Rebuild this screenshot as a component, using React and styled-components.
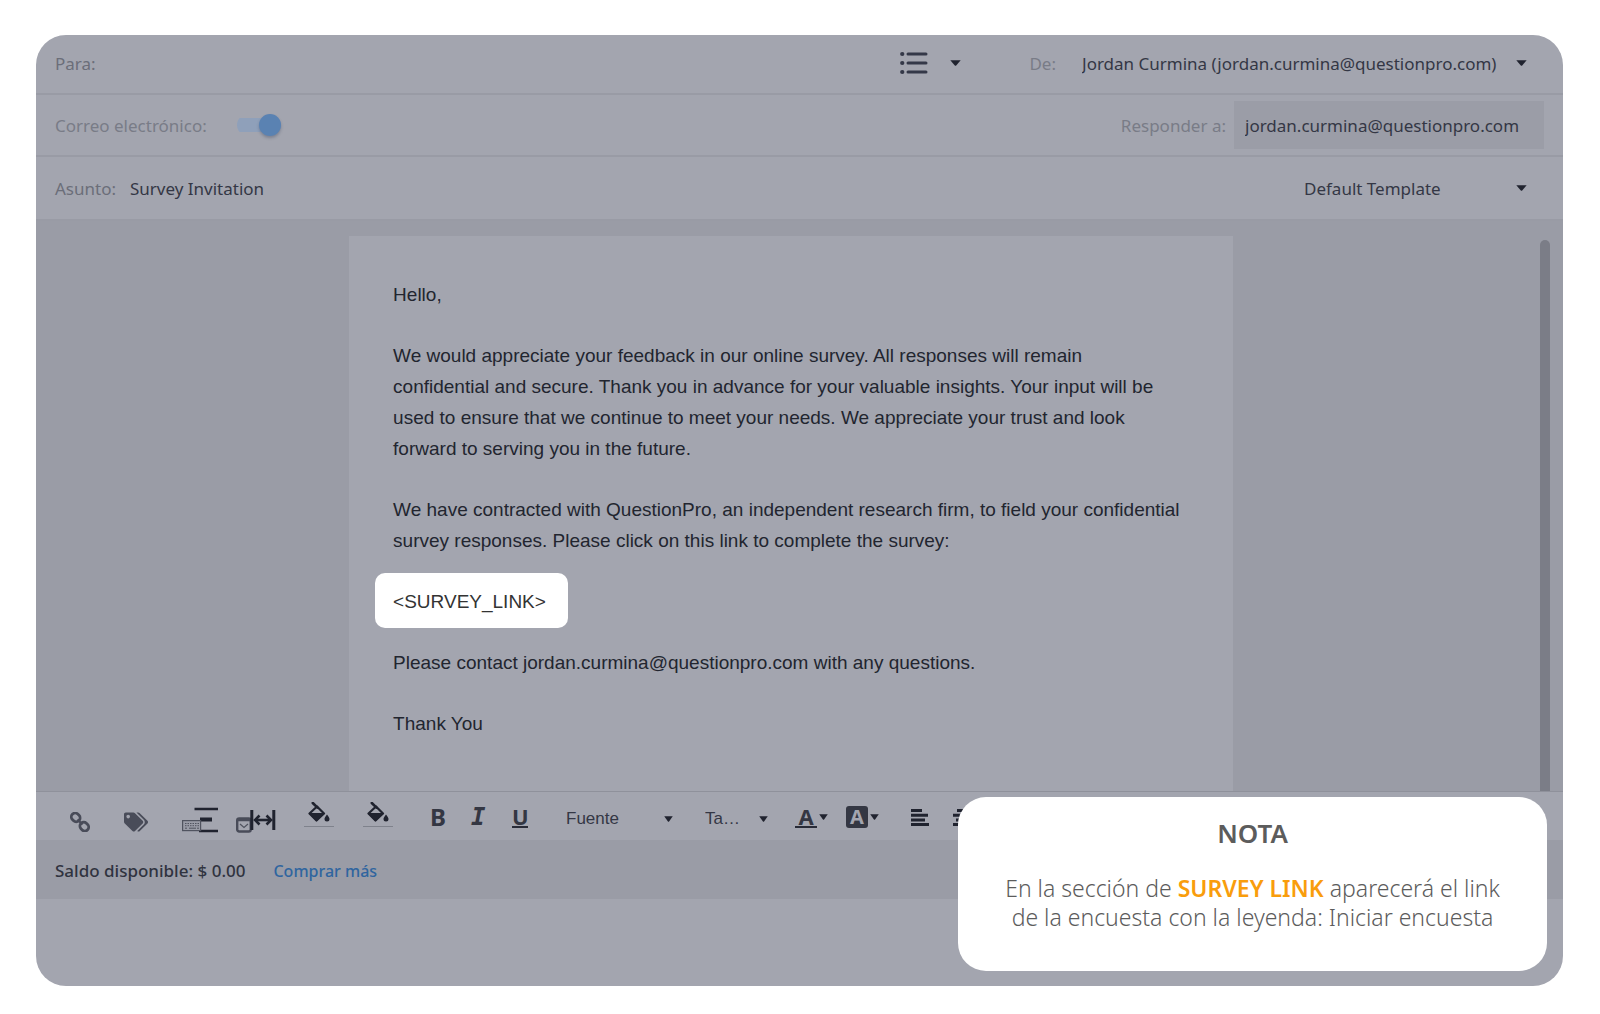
import React, { useState } from "react";
import styled, { createGlobalStyle } from "styled-components";
import { FaTags } from "react-icons/fa";

const ui = `"Noto Sans", "Open Sans", sans-serif`;
const mail = `"Liberation Sans", Arial, sans-serif`;

const GlobalStyle = createGlobalStyle`
  * {
    box-sizing: border-box;
  }
  body {
    margin: 0;
    background: #fff;
    font-family: ${ui};
  }
  button, input, select {
    font: inherit;
    color: inherit;
    margin: 0;
    padding: 0;
    border: 0;
    background: none;
    appearance: none;
  }
`;

const Page = styled.main`
  min-height: 100vh;
  padding: 35px 37px 28px 36px;
  display: flex;
`;

const Composer = styled.section`
  position: relative;
  flex: 1;
  min-width: 0;
  display: flex;
  flex-direction: column;
  border-radius: 30px;
  background-color: #a3a5af;
  overflow: hidden;
`;

const Row = styled.div`
  display: flex;
  align-items: center;
  justify-content: space-between;
  height: ${({ $height }) => $height}px;
  padding: 0 ${({ $right }) => $right || 36}px 0 19px;
  border-bottom: 2px solid #999ba5;
  font-size: 17px;
  color: #343745;

  &:first-child {
    padding-bottom: 2px;
  }
`;

const Group = styled.div`
  display: flex;
  align-items: center;
  gap: ${({ $gap }) => $gap}px;
`;

const Label = styled.label`
  color: ${({ $faded }) => ($faded ? "#797c87" : "#6b6e79")};
`;

const TextInput = styled.input`
  width: 400px;
  height: 32px;
  outline: none;
`;

const ReplyInput = styled.input`
  width: 310px;
  height: 48px;
  padding: 0 11px;
  background-color: #9b9da7;
  outline: none;
`;

const ListButton = styled.button`
  display: flex;
  align-items: center;
  gap: 22px;
  margin-right: 42px;
`;

const Picker = styled.div`
  display: flex;
  align-items: center;

  select {
    width: ${({ $width }) => $width}px;
    outline: none;
  }
`;

const Toggle = styled.input`
  width: 44px;
  height: 22px;
  display: flex;
  align-items: center;
  justify-content: flex-end;
  background: linear-gradient(#8fa0ba, #8fa0ba) center / 100% 14px no-repeat;
  border-radius: 11px;

  &::before {
    content: "";
    width: 22px;
    height: 22px;
    border-radius: 50%;
    background-color: #5a82b2;
    box-shadow: 0 2px 3px rgba(40, 50, 80, 0.3);
  }
  &:not(:checked) {
    justify-content: flex-start;
  }
`;

const EditorArea = styled.div`
  flex: 1;
  display: flex;
  padding: 15px 13px 0 6px;
  background-color: #9a9ca6;
`;

const PaperHolder = styled.div`
  flex: 1;
  display: flex;
  justify-content: center;
`;

const Paper = styled.article`
  width: 59%;
  padding: 43px 44px 0;
  background-color: #a3a5af;
  font-family: ${mail};
  font-size: 19px;
  line-height: 31px;
  color: #22252f;

  p {
    margin: 0 0 30px;
  }
`;

const SurveyLink = styled.span`
  position: relative;
  z-index: 0;
  color: #333;

  &::before {
    content: "";
    position: absolute;
    z-index: -1;
    inset: -18px -22px -16px -18px;
    border-radius: 10px;
    background-color: #fff;
  }
`;

const ScrollThumb = styled.div`
  width: 10px;
  margin-top: 4px;
  border-radius: 5px 5px 0 0;
  background-color: #7b7d87;
`;

const Toolbar = styled.div`
  display: grid;
  grid-template-columns: 54px 58px 54px 68px 59px 67px 41px 41px 54px 139px 90px 51px 65px 42px 20px;
  align-items: center;
  height: 49px;
  padding-left: 34px;
  border-top: 1px solid #8f919b;
  color: #20232f;
`;

const Tool = styled.button`
  display: flex;
  align-items: center;
  gap: 2px;
  height: 34px;
  text-align: left;
`;

const LowTool = styled(Tool)`
  padding-top: 12px;
  color: #494c59;
`;

const TextTool = styled(Tool)`
  padding-top: 2px;
`;

const FillTool = styled(Tool)`
  flex-direction: column;
  justify-content: flex-start;
  width: 30px;
  padding-top: 3px;

  &::after {
    content: "";
    width: 100%;
    height: 1px;
    background-color: #7f828c;
  }
`;

const Letter = styled.span`
  font-family: ${({ $mono }) => ($mono ? `"DejaVu Sans Mono", monospace` : ui)};
  font-size: ${({ $size }) => $size || 24}px;
  line-height: 22px;
  font-weight: 700;
  font-style: ${({ $italic }) => ($italic ? "italic" : "normal")};
  color: #343743;
`;

const Underlined = styled(Letter)`
  width: ${({ $width }) => $width}px;
  line-height: 20px;
  text-align: center;
  border-bottom: 2px solid #282b37;
`;

const Boxed = styled(Letter)`
  width: 22px;
  text-align: center;
  border-radius: 3px;
  background-color: #343743;
  color: #a3a5af;
`;

const ToolPicker = styled(Picker)`
  padding-top: 5px;
  font-family: ${mail};
  font-size: 17px;
  color: #343745;
`;

const Balance = styled.div`
  display: flex;
  align-items: center;
  gap: 28px;
  height: 59px;
  padding: 2px 0 0 19px;
  background-color: #9a9ca6;
  font-size: 17px;
  font-weight: 500;
  color: #30333f;

  a {
    font-size: 16px;
    color: #2f659f;
    text-decoration: none;
  }
`;

const Footer = styled.div`
  height: 87px;
`;

const Note = styled.aside`
  position: absolute;
  right: 16px;
  bottom: 15px;
  width: 589px;
  height: 174px;
  padding-top: 19px;
  border-radius: 28px;
  background-color: #fff;
  text-align: center;
  color: #5c5c5c;

  h2 {
    margin: 0 0 24px;
    font-size: 26px;
    line-height: 34px;
    font-weight: 600;
  }
  p {
    margin: 0;
    font-size: 23px;
    line-height: 29px;
    font-weight: 300;
  }
  strong {
    font-weight: 600;
    color: #f99d0c;
  }
`;

const Caret = ({ size = 11 }) => (
  <svg width={size} height="6" viewBox="0 0 11 6" preserveAspectRatio="none" aria-hidden="true">
    <path d="M0.3 0.2h10.4L6.2 5.4a1 1 0 0 1-1.4 0z" fill="#20232f" />
  </svg>
);

const ListIcon = () => (
  <svg width="28" height="24" viewBox="0 0 28 24" stroke="#343848" strokeWidth="3" strokeLinecap="round">
    <path d="M8 3h18M8 12h18M8 21h18" />
    <path d="M2.2 3h.1M2.2 12h.1M2.2 21h.1" strokeWidth="4.2" />
  </svg>
);

const ChainIcon = () => (
  <svg width="20" height="20" viewBox="0 0 20 20" fill="none" stroke="#494c59" strokeWidth="2.8">
    <rect x="1.2" y="1.6" width="9" height="7.6" rx="3.6" transform="rotate(45 5.7 5.4)" />
    <rect x="9.8" y="10.8" width="9" height="7.6" rx="3.6" transform="rotate(45 14.3 14.6)" />
    <path d="M7.5 7.5l5 5" strokeWidth="2.4" />
  </svg>
);

const SpacingIcon = () => (
  <svg width="36" height="34" viewBox="0 0 36 34" fill="none" stroke="#20232f">
    <path d="M12.5 10h23.5M17 32h19" strokeWidth="2.4" />
    <path d="M18 20.5h12" strokeWidth="4" />
    <rect x="0.6" y="21.6" width="18" height="10" fill="#999ba6" stroke="#50535f" strokeWidth="1.2" />
    <path d="M3 24.5h14M3 26.7h14" stroke="#50535f" strokeDasharray="1.5 1" />
    <path d="M3 29.2h2m2 0h7m1 0h2" stroke="#50535f" />
  </svg>
);

const WidthIcon = () => (
  <svg width="40" height="34" viewBox="0 0 40 34" fill="none" stroke="#20232f">
    <rect x="1.2" y="19.5" width="13.5" height="13" rx="2" stroke="#494c59" strokeWidth="2.4" />
    <path d="M1 21h13" stroke="#494c59" strokeWidth="2.4" />
    <path d="M4 25l4 3.5 4-3.5" stroke="#50535f" strokeWidth="1.2" />
    <path d="M15.8 11v20M37.8 11v20" strokeWidth="3" />
    <path d="M20 21h14" strokeWidth="2.6" />
    <path d="M23.5 16.5L19 21l4.5 4.5M30.5 16.5L35 21l-4.5 4.5" strokeWidth="2.6" />
  </svg>
);

const BucketIcon = () => (
  <svg width="22" height="22" viewBox="0 0 22 22" fill="none">
    <path d="M9 4.5L16 11.5 8.5 18.5 1.5 11.5z" stroke="#20232f" strokeWidth="2.2" strokeLinejoin="round" />
    <path d="M1 11h15.5l-7.3 7.8a1 1 0 0 1-1.4 0z" fill="#20232f" />
    <path d="M4.8 1l4.7 4.7" stroke="#20232f" strokeWidth="2.6" strokeLinecap="round" />
    <path d="M19 12.600c1.300 1.900 2.500 3.200 2.500 4.500a2.500 2.500 0 0 1-5 0c0-1.300 1.200-2.600 2.500-4.500z" fill="#20232f" />
  </svg>
);

const AlignIcon = ({ d }) => (
  <svg width="18" height="17" viewBox="0 0 18 17" stroke="#20232f" strokeWidth="3">
    <path d={d} />
  </svg>
);

const App = () => {
  const [emailOn, setEmailOn] = useState(true);
  const [to, setTo] = useState("");
  const [replyTo, setReplyTo] = useState("jordan.curmina@questionpro.com");
  const [subject, setSubject] = useState("Survey Invitation");

  return (
    <>
      <GlobalStyle />
      <Page>
        <Composer>
          <Row $height={60}>
            <Group $gap={14}>
              <Label htmlFor="to">Para:</Label>
              <TextInput id="to" value={to} onChange={(e) => setTo(e.target.value)} />
            </Group>
            <Group $gap={26}>
              <ListButton type="button" aria-label="Listas">
                <ListIcon />
                <Caret />
              </ListButton>
              <Label htmlFor="from" $faded>De:</Label>
              <Picker $width={434}>
                <select id="from">
                  <option>Jordan Curmina (jordan.curmina@questionpro.com)</option>
                </select>
                <Caret />
              </Picker>
            </Group>
          </Row>
          <Row $height={62} $right={19}>
            <Group $gap={30}>
              <Label htmlFor="email" $faded>Correo electrónico:</Label>
              <Toggle
                id="email"
                type="checkbox"
                checked={emailOn}
                onChange={() => setEmailOn(!emailOn)}
              />
            </Group>
            <Group $gap={8}>
              <Label htmlFor="reply" $faded>Responder a:</Label>
              <ReplyInput id="reply" value={replyTo} onChange={(e) => setReplyTo(e.target.value)} />
            </Group>
          </Row>
          <Row $height={64}>
            <Group $gap={14}>
              <Label htmlFor="subject">Asunto:</Label>
              <TextInput id="subject" value={subject} onChange={(e) => setSubject(e.target.value)} />
            </Group>
            <Picker $width={212}>
              <select aria-label="Plantilla">
                <option>Default Template</option>
              </select>
              <Caret />
            </Picker>
          </Row>

          <EditorArea>
            <PaperHolder>
              <Paper>
                <p>Hello,</p>
                <p>
                  We would appreciate your feedback in our online survey. All responses will remain
                  <br />
                  confidential and secure. Thank you in advance for your valuable insights. Your input will be
                  <br />
                  used to ensure that we continue to meet your needs. We appreciate your trust and look
                  <br />
                  forward to serving you in the future.
                </p>
                <p>
                  We have contracted with QuestionPro, an independent research firm, to field your confidential
                  <br />
                  survey responses. Please click on this link to complete the survey:
                </p>
                <p>
                  <SurveyLink>&lt;SURVEY_LINK&gt;</SurveyLink>
                </p>
                <p>Please contact jordan.curmina@questionpro.com with any questions.</p>
                <p>Thank You</p>
              </Paper>
            </PaperHolder>
            <ScrollThumb />
          </EditorArea>

          <Toolbar>
            <LowTool type="button" aria-label="Enlace"><ChainIcon /></LowTool>
            <LowTool type="button" aria-label="Etiquetas"><FaTags size={24} /></LowTool>
            <Tool type="button" aria-label="Espaciado"><SpacingIcon /></Tool>
            <Tool type="button" aria-label="Ancho"><WidthIcon /></Tool>
            <FillTool type="button" aria-label="Color de fondo"><BucketIcon /></FillTool>
            <FillTool type="button" aria-label="Color de relleno"><BucketIcon /></FillTool>
            <TextTool type="button" aria-label="Negrita"><Letter>B</Letter></TextTool>
            <TextTool type="button" aria-label="Cursiva"><Letter $mono $italic>I</Letter></TextTool>
            <TextTool type="button" aria-label="Subrayado"><Underlined $width={16} $size={22}>U</Underlined></TextTool>
            <ToolPicker $width={98}>
              <select aria-label="Fuente">
                <option>Fuente</option>
              </select>
              <Caret size={9} />
            </ToolPicker>
            <ToolPicker $width={54}>
              <select aria-label="Tamaño">
                <option>Ta…</option>
              </select>
              <Caret size={9} />
            </ToolPicker>
            <TextTool type="button" aria-label="Color de texto">
              <Underlined $width={22} $size={22}>A</Underlined>
              <Caret size={9} />
            </TextTool>
            <TextTool type="button" aria-label="Color de resaltado">
              <Boxed $size={20}>A</Boxed>
              <Caret size={9} />
            </TextTool>
            <TextTool type="button" aria-label="Alinear a la izquierda">
              <AlignIcon d="M0 1.5h11M0 6.2h17M0 10.9h14M0 15.5h18" />
            </TextTool>
            <TextTool type="button" aria-label="Centrar">
              <AlignIcon d="M4 1.5h10M0 6.2h18M3 10.9h12M0 15.5h18" />
            </TextTool>
          </Toolbar>
          <Balance>
            <span>Saldo disponible: $ 0.00</span>
            <a href="#comprar">Comprar más</a>
          </Balance>
          <Footer />

          <Note>
            <h2>NOTA</h2>
            <p>
              En la sección de <strong>SURVEY LINK</strong> aparecerá el link
              <br />
              de la encuesta con la leyenda: Iniciar encuesta
            </p>
          </Note>
        </Composer>
      </Page>
    </>
  );
};

export default App;
